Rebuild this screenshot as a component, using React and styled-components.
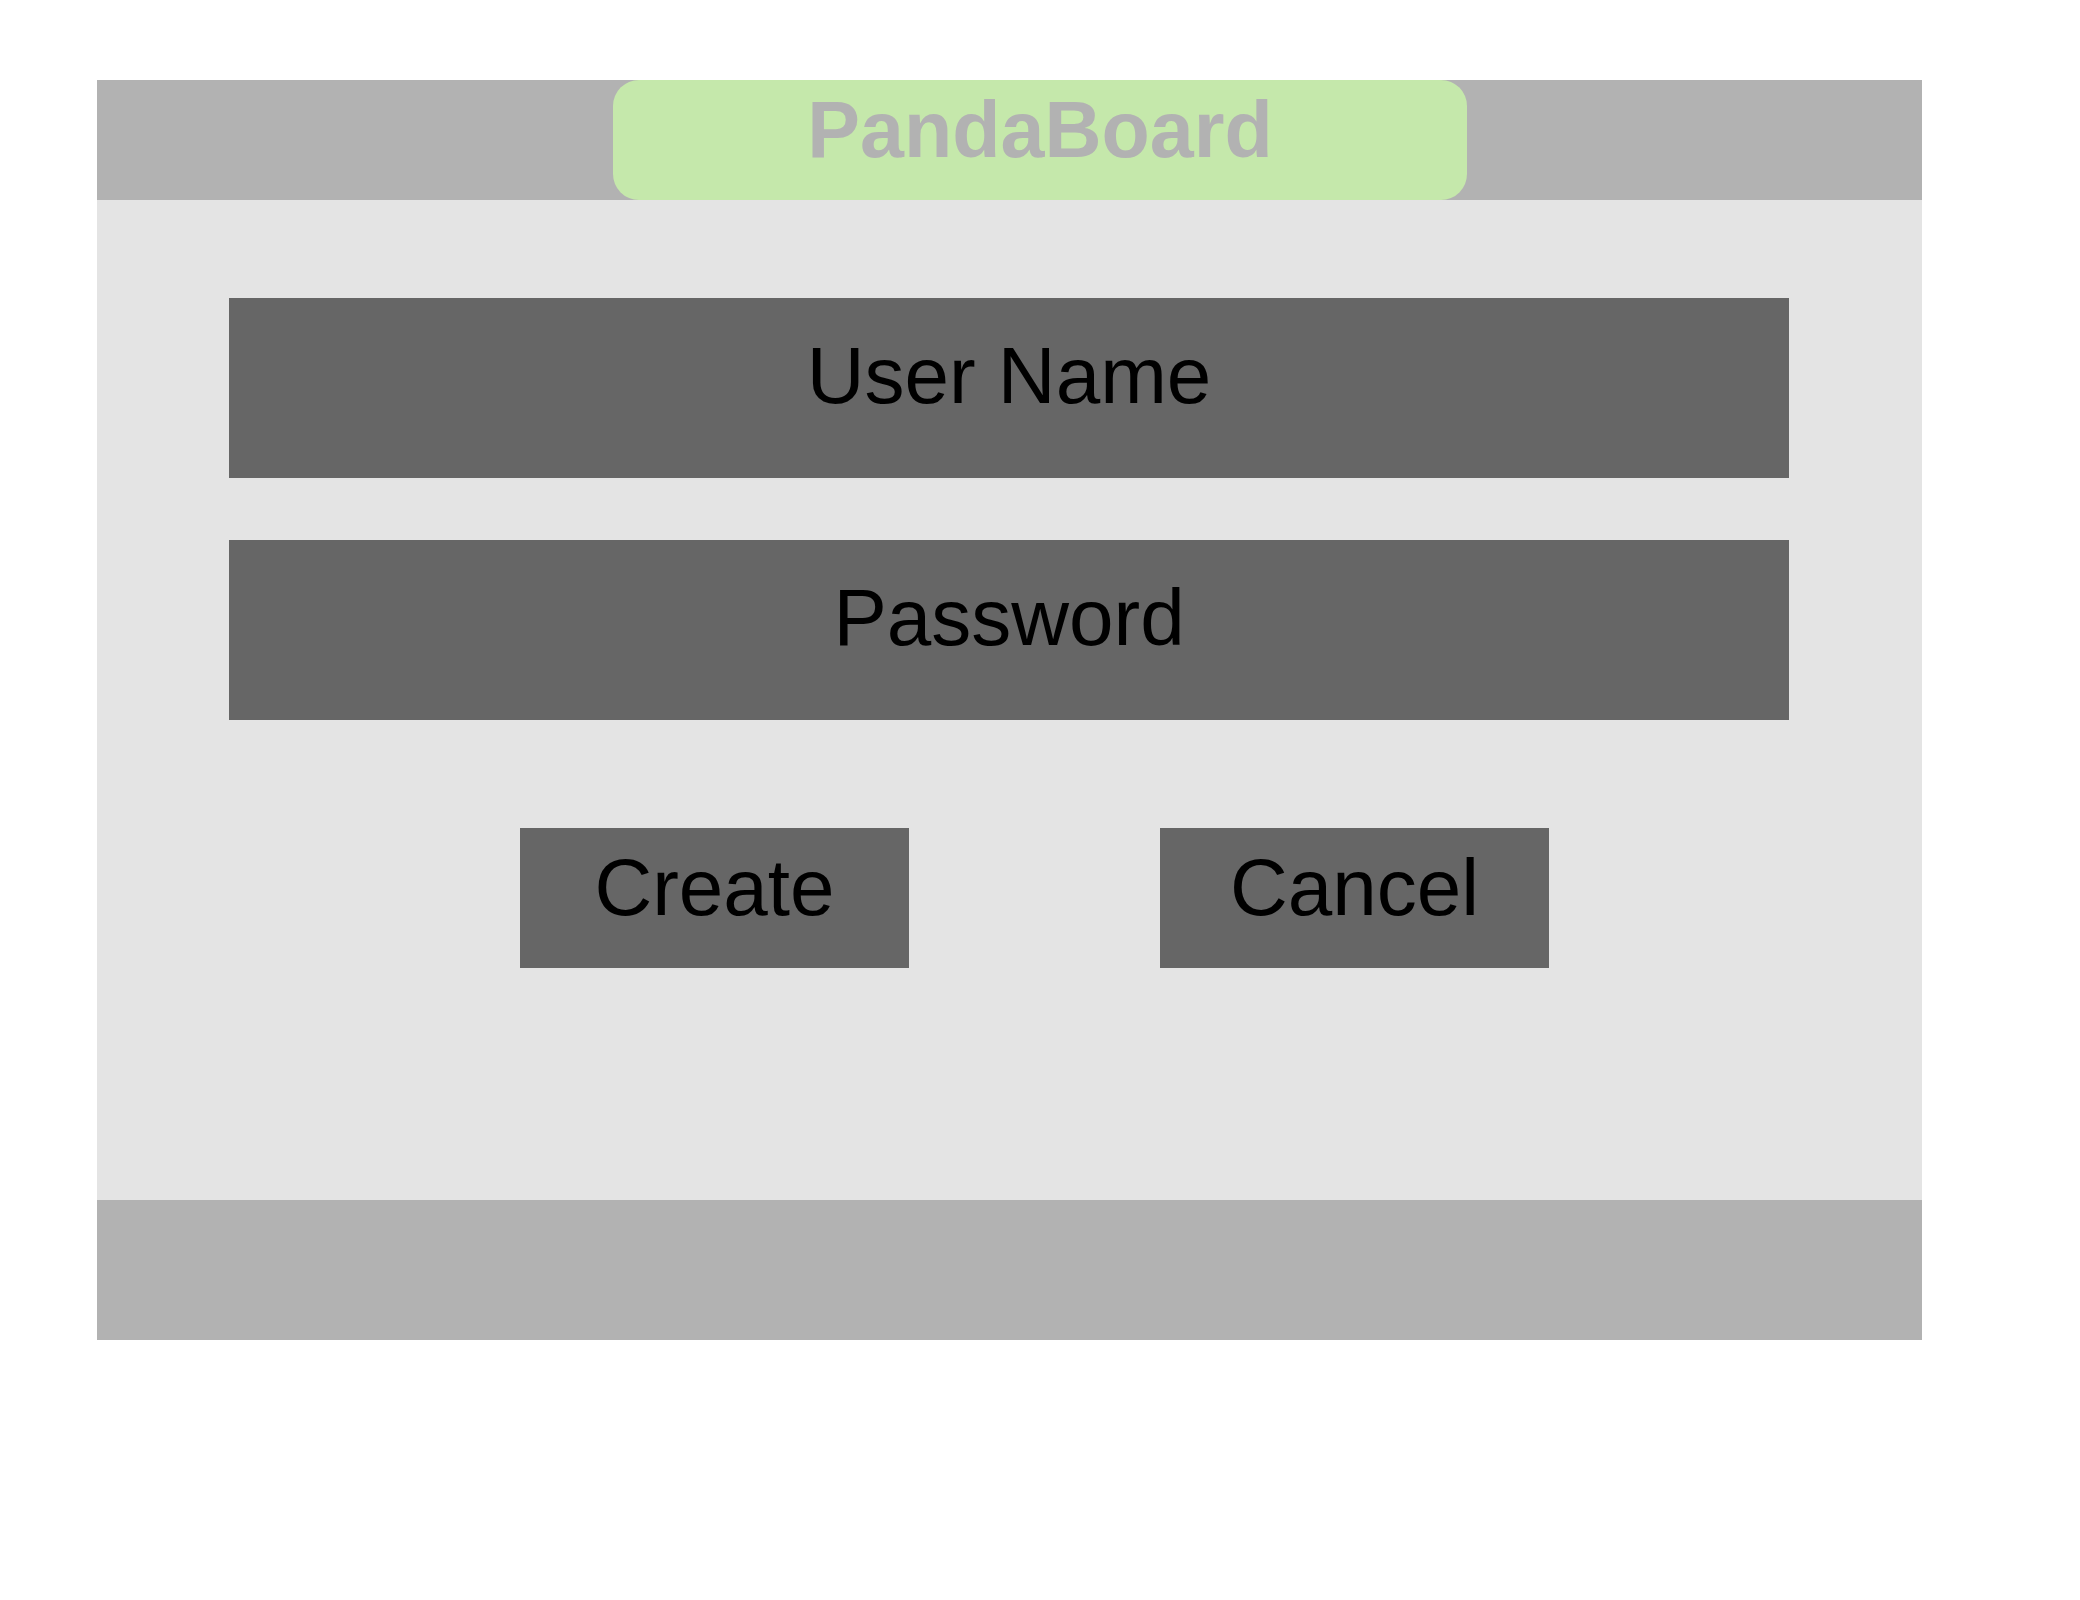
import styled, { createGlobalStyle } from "styled-components";

const GlobalStyle = createGlobalStyle`
  body {
    margin: 0;
    background: #ffffff;
    font-family: "Liberation Sans", Arial, sans-serif;
  }
`;

const Frame = styled.div`
  width: 1825px;
  margin: 80px 0 0 97px;
  display: flex;
  flex-direction: column;
`;

const Header = styled.header`
  height: 120px;
  background: #b2b2b2;
  padding-left: 516px;
  display: flex;
`;

const TitlePill = styled.div`
  width: 854px;
  height: 120px;
  box-sizing: border-box;
  padding-top: 10px;
  background: #c5e8ab;
  border-radius: 26px;
  text-align: center;
  font-size: 79px;
  line-height: 79px;
  font-weight: bold;
  color: #b2b2b2;
`;

const Body = styled.main`
  height: 1000px;
  box-sizing: border-box;
  background: #e4e4e4;
  padding: 98px 0 0 132px;
  display: flex;
  flex-direction: column;
`;

const Field = styled.div`
  width: 1560px;
  height: 180px;
  box-sizing: border-box;
  padding-top: 38px;
  margin-bottom: ${(p) => p.$gap || 0}px;
  background: #666666;
  text-align: center;
  font-size: 80px;
  line-height: 80px;
  color: #000;
`;

const ButtonRow = styled.div`
  display: flex;
  gap: 251px;
  padding-left: 291px;
`;

const Button = styled.button`
  width: 389px;
  height: 140px;
  box-sizing: border-box;
  padding: 20px 0 0;
  border: none;
  background: #666666;
  font-family: "Liberation Sans", Arial, sans-serif;
  font-size: 80px;
  line-height: 80px;
  color: #000;
  display: flex;
  align-items: flex-start;
  justify-content: center;
`;

const Footer = styled.footer`
  height: 140px;
  background: #b2b2b2;
`;

export default function App() {
  return (
    <>
      <GlobalStyle />
      <Frame>
        <Header>
          <TitlePill>PandaBoard</TitlePill>
        </Header>
        <Body>
          <Field $gap={62}>User Name</Field>
          <Field $gap={108}>Password</Field>
          <ButtonRow>
            <Button>Create</Button>
            <Button>Cancel</Button>
          </ButtonRow>
        </Body>
        <Footer />
      </Frame>
    </>
  );
}
